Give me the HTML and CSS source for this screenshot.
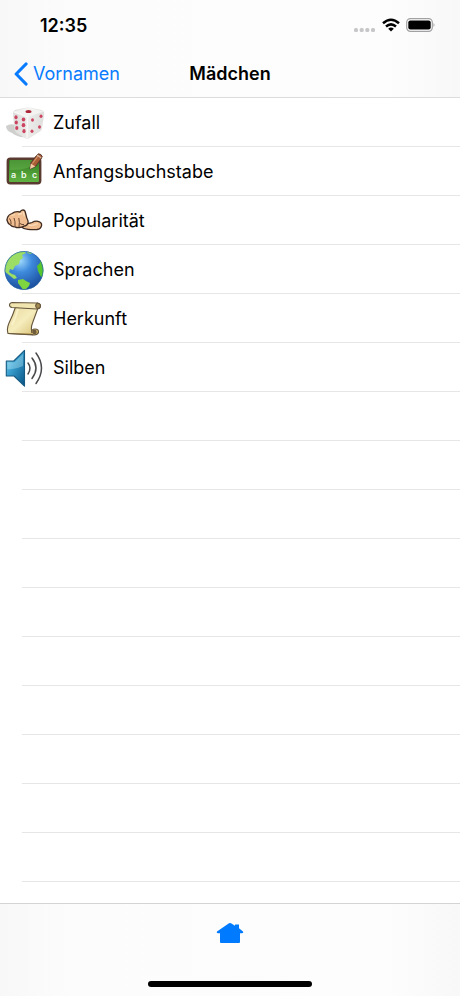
FILE: index.html
```html
<!DOCTYPE html>
<html lang="de">
<head>
<meta charset="utf-8">
<meta name="viewport" content="width=device-width, initial-scale=1">
<title>Mädchen</title>
<link rel="stylesheet" href="styles.css">
</head>
<body>
<div class="screen">
  <header class="top">
    <div class="status">
      <time class="clock">12:35</time>
      <div class="indicators">
        <svg width="22" height="20" viewBox="0 0 22 20" fill="#c7c7c9" aria-hidden="true">
          <rect x="0" y="13" width="4" height="4" rx="1.5"/><rect x="5.7" y="13" width="4" height="4" rx="1.5"/><rect x="11.3" y="13" width="4" height="4" rx="1.5"/><rect x="17" y="13" width="4" height="4" rx="1.5"/>
        </svg>
        <svg width="18" height="20" viewBox="0 0 18 20" fill="none" stroke="#000" stroke-width="2.5" aria-hidden="true">
          <path d="M1 8.300Q9 1.300 17 8.300M4 11.500Q9 7.200 14 11.500"/>
          <path d="M6.200 13.700Q9 11.400 11.800 13.700L9 16.500Z" fill="#000" stroke="none"/>
        </svg>
        <svg width="30" height="20" viewBox="0 0 30 20" aria-hidden="true">
          <rect x=".7" y="3.700" width="25.600" height="12.600" rx="3.700" fill="#fff" stroke="#a1a1a3" stroke-width="1.200"/>
          <rect x="2.300" y="5.500" width="22.400" height="9" rx="2" fill="#000"/>
          <path d="M27.500 8q2 2 0 4Z" fill="#a1a1a3"/>
        </svg>
      </div>
    </div>
    <nav class="nav">
      <a class="back" href="#vornamen">
        <svg width="14" height="24" viewBox="0 0 14 24" fill="none" stroke="currentColor" stroke-width="3.2" stroke-linecap="round" stroke-linejoin="round" aria-hidden="true"><path d="M12 2 2.200 12 12 22"/></svg>
        <span>Vornamen</span>
      </a>
      <h1 class="title">Mädchen</h1>
    </nav>
  </header>

  <main class="content">
    <ul class="list">
      <li><a class="row" href="#zufall">
        <svg class="icon" viewBox="0 0 48 48" aria-hidden="true">
          <defs><linearGradient id="die" x1="0" x2="1"><stop offset="0" stop-color="#dcdcda"/><stop offset=".5" stop-color="#ececea"/><stop offset="1" stop-color="#dededc"/></linearGradient></defs>
          <path d="M6 27q4-3 10-1l11 12q-9 1-15-4Q6 32 6 27Z" fill="#cfcfcd"/>
          <path d="M13 14.500Q13 11.500 16 10.800L27 8.500Q29 8.200 31 8.700L41.500 11Q44.500 12 44.200 15L42 29Q42 31 40 32.500L29 39.500Q27 40.500 25 39L16.500 34Q14.500 32.500 14.300 30Z" fill="url(#die)"/>
          <path d="M13.500 12.800 28.500 8.500 43.500 12.500 28 18Z" fill="#f3f3f1"/>
          <path d="M14 13 27.500 18 27 39" fill="none" stroke="#f9f9f8" stroke-width="1.300"/>
          <ellipse cx="28.500" cy="12.500" rx="3" ry="1.600" fill="#ad2738"/>
          <g fill="#cc4560"><ellipse cx="16" cy="18.200" rx="1.600" ry="2"/><ellipse cx="23.500" cy="20.500" rx="1.800" ry="2.100"/><ellipse cx="16.300" cy="23.600" rx="1.600" ry="2"/><ellipse cx="23.500" cy="26.200" rx="1.800" ry="2.100"/><ellipse cx="16.800" cy="29" rx="1.600" ry="2"/><ellipse cx="24" cy="32.200" rx="1.600" ry="2.100"/><ellipse cx="32.500" cy="21" rx="1.500" ry="1.800"/><ellipse cx="41" cy="17.300" rx="1.500" ry="1.800"/><ellipse cx="32" cy="32.300" rx="1.500" ry="1.800"/><ellipse cx="39.500" cy="28" rx="1.500" ry="1.800"/></g>
        </svg>
        <span>Zufall</span></a></li>
      <li><a class="row" href="#anfangsbuchstabe">
        <svg class="icon" viewBox="0 0 48 48" aria-hidden="true">
          <defs><linearGradient id="board" x1="0" y1="0" x2="0" y2="1"><stop offset="0" stop-color="#2f7a20"/><stop offset="1" stop-color="#62b544"/></linearGradient></defs>
          <rect x="7.800" y="10.800" width="32.400" height="24.400" rx="2.500" fill="url(#board)" stroke="#5a3b30" stroke-width="2.400"/>
          <path d="M10 12h28v3q-13 8-28 7Z" fill="#7ac35e" opacity=".35"/>
          <text x="11" y="30" class="chalk">a</text><text x="21" y="30" class="chalk">b</text><text x="32" y="30" class="chalk">c</text>
          <path d="M30.800 15 36.500 7.500Q38 4.700 40.800 6.500 43.500 8.200 41 11L35.500 18.500 30 21Z" fill="#a95d35" stroke="#54342b"/>
          <path d="m30.800 15.500 4.500 3L30 21Z" fill="#f1cba1"/><path d="m32.500 15.500 5.800-8" stroke="#d69366" stroke-width="1.200"/>
          <path d="m37 7 4.300 3" stroke="#d5b8a5" stroke-width="1.200"/>
        </svg>
        <span>Anfangsbuchstabe</span></a></li>
      <li><a class="row" href="#popularitaet">
        <svg class="icon" viewBox="0 0 48 48" aria-hidden="true">
          <g fill="#f0be90" stroke="#3f2b20" stroke-width="1.300" stroke-linejoin="round">
            <path d="M24 26q5 1 8-.5 3-1.800 6-1.200 4 .9 3.600 4-.6 3.500-4.600 4.200-5 .5-9-.2-5-.5-8-3.300Z"/>
            <path d="M7.500 20.500q1-3 4.500-4 3-2.500 8-1.500 1-2 3-2.200 2.200.2 2.500 3.200l1.300 5q1.700 3 1.200 5-1 3-4 3.200-3 1.500-5 1.300-2 .3-4-.7-3 .2-4.500-1.800-2.500-1-3-3.500-1-2 0-4Z"/>
          </g>
          <path d="M9.500 21.500q2 2.500 1.500 5.500M14 21q1.500 3.500 1 8M18.800 21q1 4 .2 9M24 27.500q-2 .5-4-1" fill="none" stroke="#6b4632" stroke-width="1"/>
          <path d="m11.500 18.500 3.500-1m3 0 4-1m1-2 1.500 5M29 28q4 1 9-1.500" fill="none" stroke="#fbdcb8" stroke-width="1.300"/>
        </svg>
        <span>Popularität</span></a></li>
      <li><a class="row" href="#sprachen">
        <svg class="icon" viewBox="0 0 48 48" aria-hidden="true">
          <defs><radialGradient id="sea" cx=".4" cy=".25" r=".75"><stop offset="0" stop-color="#9ed8fb"/><stop offset=".4" stop-color="#3f8bdd"/><stop offset="1" stop-color="#1b4f9e"/></radialGradient>
          <clipPath id="globe"><circle cx="24" cy="24.500" r="19.300"/></clipPath></defs>
          <circle cx="24" cy="24.500" r="19.300" fill="url(#sea)"/>
          <g clip-path="url(#globe)">
            <path d="M5 20q2-10 10-14 5-1 9-1l2 2-4 2 1 3-3 2-1 4-4 2-2 4-3-1-1 3 3 2 3 1 2 3-3 1-5-4-5-4Z" fill="#9bdd65"/>
            <path d="m18 34 5-1 3 2 4 2-1 3-3 3-2 2-3-4-3-4Z" fill="#7ed53f"/>
            <path d="m40 14 4 2v14l-3 1-3-6-1-5 3-3Z" fill="#55c62c"/>
            <path d="m28 5 5 1-2 2-4-1Z" fill="#9bdd65"/>
          </g>
          <circle cx="24" cy="24.500" r="19" fill="none" stroke="#2b65a8" stroke-width=".7"/>
        </svg>
        <span>Sprachen</span></a></li>
      <li><a class="row" href="#herkunft">
        <svg class="icon" viewBox="0 0 48 48" aria-hidden="true">
          <defs><linearGradient id="paper" x1="0" y1="0" x2="1" y2="1"><stop offset="0" stop-color="#e6d79c"/><stop offset=".5" stop-color="#f6edbd"/><stop offset="1" stop-color="#d5bd70"/></linearGradient></defs>
          <g stroke="#66563c" stroke-width="1.100" stroke-linejoin="round">
            <path d="M15.500 12Q13 20 9 28 6.500 34 8 38.500L33 40Q30 34 32.500 28L38 13Z" fill="url(#paper)"/>
            <path d="M12 7.500 37 8q3.500.5 3.500 3 0 3-4 3L12 12.500Q9.500 12 9.500 10t2.500-2.500Z" fill="#f1e6b0"/>
            <path d="M37.500 8q-3 2-1 5 3.500 1 4-2 0-2.500-3-3Z" fill="#a28950"/>
            <path d="M8 38.500 31.500 39.500Q37 41 38.500 37.500 39 34 35 34q-4 0-3 4" fill="#d2b769"/>
            <circle cx="34.500" cy="37" r="1.600" fill="#796039"/>
          </g>
          <path d="M18 14q-2 8-6 16" fill="none" stroke="#fff9d8" stroke-width="2" opacity=".6"/>
        </svg>
        <span>Herkunft</span></a></li>
      <li><a class="row" href="#silben">
        <svg class="icon" viewBox="0 0 48 48" aria-hidden="true">
          <defs><linearGradient id="speaker" x1="0" y1="0" x2="1" y2="1"><stop offset="0" stop-color="#91d9ee"/><stop offset=".4" stop-color="#399fcf"/><stop offset="1" stop-color="#075384"/></linearGradient></defs>
          <path d="M6.300 17h7.500L24.500 6.300V42.200L14 32H6.300Z" fill="url(#speaker)" stroke="#165a82" stroke-width="1.100" stroke-linejoin="round"/>
          <path d="M7.500 18.300h7L23 10v12q-8 4-15.500 3Z" fill="#c2f0fb" opacity=".35"/>
          <g fill="none" stroke="#4a4a4c" stroke-width="1.500" stroke-linecap="round"><path d="M28 19q4 5 0 11"/><path d="M32 14q8 10 0 20.500"/><path d="M36 9q11 15 0 30.500"/></g>
        </svg>
        <span>Silben</span></a></li>
    </ul>
  </main>

  <footer class="toolbar">
    <a class="home" href="#start" aria-label="Startseite">
      <svg width="28" height="22" viewBox="0 0 28 22" fill="currentColor" aria-hidden="true"><path d="M13 1.300Q14 .6 15 1.300L19 3.700V2.500H23V6.300L27 9.400Q28 11 26 11.200H24V20Q24 21 23 21H5Q4 21 4 20V11.200H2Q0 11 1 9.400Z"/></svg>
    </a>
    <div class="grabber"></div>
  </footer>
</div>
</body>
</html>
```
FILE: styles.css
```css
* {
  box-sizing: border-box;
}

body {
  margin: 0;
  background: #fff;
  color: #000;
  font-family: Inter, "Liberation Sans", sans-serif;
}

a {
  color: inherit;
  text-decoration: none;
}

svg {
  display: block;
  flex: none;
}

.screen {
  display: flex;
  flex-direction: column;
  min-height: 100vh;
}

.top,
.toolbar {
  background: linear-gradient(90deg, #f8f8f8, #fcfcfc 16%, #fdfdfd 84%, #f8f8f8);
}

.top {
  border-bottom: 1px solid #dcdcdc;
}

.status {
  display: flex;
  align-items: center;
  justify-content: space-between;
  height: 50px;
  padding: 0 24px 0 40px;
}

.clock {
  font-size: 18px;
  font-weight: 600;
}

.indicators {
  display: flex;
  align-items: center;
  gap: 6px;
}

.nav {
  display: grid;
  grid-template-columns: 1fr auto 1fr;
  align-items: center;
  height: 47px;
  padding: 0 14px;
}

.back {
  display: flex;
  align-items: center;
  gap: 5px;
  color: #087bff;
  font-size: 18px;
}

.title {
  margin: 0;
  font-size: 18px;
  font-weight: 600;
}

.content {
  flex: 1;
  background: repeating-linear-gradient(transparent 0 48px, #e6e6e6 48px 49px) 22px 0 no-repeat;
}

.list {
  margin: 0;
  padding: 0;
  list-style: none;
}

.row {
  display: flex;
  align-items: center;
  gap: 5px;
  height: 49px;
  font-size: 18px;
}

.icon {
  width: 48px;
  height: 48px;
}

.chalk {
  fill: #edf8e8;
  font-size: 9px;
  font-weight: 600;
}

.toolbar {
  display: flex;
  flex-direction: column;
  align-items: center;
  justify-content: space-between;
  height: 93px;
  padding: 18px 0 9px;
  border-top: 1px solid #d4d4d4;
}

.home {
  color: #007aff;
}

.grabber {
  width: 164px;
  height: 6px;
  border-radius: 3px;
  background: #000;
}
```
